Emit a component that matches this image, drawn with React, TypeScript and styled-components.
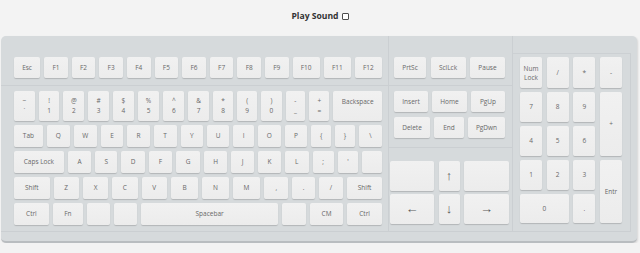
import React from "react";
import styled, { createGlobalStyle } from "styled-components";

const Global = createGlobalStyle`
  html, body { margin: 0; padding: 0; background: #f3f3f3; }
  body { font-family: "Open Sans", "DejaVu Sans", sans-serif; }
`;

const Header = styled.div`
  height: 36px;
  display: flex;
  align-items: center;
  justify-content: center;
  padding-bottom: 5px;
  box-sizing: border-box;
`;

const Title = styled.label`
  font: 700 8.6px "Open Sans", sans-serif;
  color: #333;
  display: flex;
  align-items: center;
`;

const Check = styled.input`
  appearance: none;
  width: 7px;
  height: 7px;
  margin: 1px 0 0 3px;
  border: 1px solid #4d4d4d;
  border-radius: 1px;
  background: #fff;
  box-sizing: border-box;
`;

const Board = styled.div`
  margin-left: 1px;
  width: 636px;
  height: 207px;
  box-sizing: border-box;
  display: flex;
  align-items: stretch;
  padding: 0 6px 9px 0;
  background: #d6dadc;
  border-radius: 5px;
  border-bottom: 2px solid #b9bdc0;
  box-shadow: 1px 1px 2px rgba(0, 0, 0, 0.12);
`;

const line = "1px solid #cbcfd2";

const Section = styled.div<{ $w: number }>`
  width: ${(p) => p.$w}px;
  box-sizing: border-box;
  border-right: ${line};
  display: flex;
  flex-direction: column;
`;

const Block = styled.div<{ $pad: string; $fill?: boolean; $gap?: number }>`
  padding: ${(p) => p.$pad};
  border-bottom: ${line};
  display: flex;
  flex-direction: column;
  gap: ${(p) => p.$gap ?? 4}px;
  flex: ${(p) => (p.$fill ? "1 1 auto" : "0 0 auto")};
`;

const Row = styled.div<{ $h: number; $gap?: number }>`
  display: flex;
  height: ${(p) => p.$h}px;
  gap: ${(p) => p.$gap ?? 4}px;
`;

const Key = styled.div<{ $w?: number; $top?: boolean; $lh?: number; $arrow?: boolean }>`
  flex: ${(p) => p.$w ?? 1} 1 0;
  min-width: 0;
  display: flex;
  flex-direction: column;
  align-items: center;
  justify-content: ${(p) => (p.$top ? "flex-start" : "center")};
  padding-top: ${(p) => (p.$top ? "6px" : "0")};
  box-sizing: border-box;
  background: linear-gradient(#f1f1f1, #ececec);
  border-radius: 2px;
  box-shadow: 0 1px 1px rgba(0, 0, 0, 0.17);
  font-family: ${(p) => (p.$arrow ? '"Liberation Sans", sans-serif' : '"Open Sans", sans-serif')};
  font-size: ${(p) => (p.$arrow ? "13px" : "6.5px")};
  line-height: ${(p) => p.$lh ?? 10}px;
  color: ${(p) => (p.$arrow ? "#5a5a5a" : "#686868")};
  white-space: nowrap;
`;

const Arrows = styled.div`
  display: grid;
  grid-template-columns: 44px 21px 45px;
  grid-template-rows: 30px 30px;
  column-gap: 4.5px;
  row-gap: 3px;
`;

const Numpad = styled.div`
  width: 118px;
  box-sizing: border-box;
  margin-top: 17px;
  border-top: 1px solid #ccd0d3;
  border-right: ${line};
  border-bottom: ${line};
  padding: 3px 8px 7px 7px;
`;

const PadGrid = styled.div`
  display: grid;
  grid-template-columns: repeat(4, 1fr);
  grid-template-rows: 31px 30px 30px 30px 29px;
  column-gap: 4.67px;
  row-gap: 4px;
`;

const PadKey = styled(Key)<{ $col?: string; $row?: string }>`
  grid-column: ${(p) => p.$col ?? "auto"};
  grid-row: ${(p) => p.$row ?? "auto"};
`;

type K = [string | string[], number];

const fnRow: K[] = [
  ["Esc", 26],
  ...Array.from({ length: 9 }, (_, i) => [`F${i + 1}`, 23.5] as K),
  ["F10", 27],
  ["F11", 27],
  ["F12", 27],
];

const numRow: K[] = [
  [["~", "`"], 20.5],
  [["!", "1"], 20.5],
  [["@", "2"], 20.5],
  [["#", "3"], 20.5],
  [["$", "4"], 20.5],
  [["%", "5"], 21.5],
  [["^", "6"], 20.5],
  [["&", "7"], 20.5],
  [["*", "8"], 20],
  [["(", "9"], 20],
  [[")", "0"], 20],
  [["-", "_"], 19.5],
  [["+", "="], 20],
  ["Backspace", 48],
];

const qRow: K[] = [
  ["Tab", 29],
  ["Q", 23],
  ["W", 23],
  ["E", 22.5],
  ["R", 22.5],
  ["T", 23],
  ["Y", 22.5],
  ["U", 22.5],
  ["I", 20.5],
  ["O", 23],
  ["P", 22.5],
  ["{", 20],
  ["}", 20],
  ["\\", 23],
];

const aRow: K[] = [
  ["Caps Lock", 49],
  ["A", 23],
  ["S", 22],
  ["D", 23],
  ["F", 23],
  ["G", 23.5],
  ["H", 23],
  ["J", 22],
  ["K", 23],
  ["L", 23],
  [";", 21],
  ["'", 20],
  ["", 19.5],
];

const zRow: K[] = [
  ["Shift", 35],
  ["Z", 25],
  ["X", 25],
  ["C", 25],
  ["V", 25],
  ["B", 27],
  ["N", 26],
  ["M", 27],
  [",", 24],
  [".", 22],
  ["/", 24],
  ["Shift", 34.5],
];

const ctrlRow: K[] = [
  ["Ctrl", 34.5],
  ["Fn", 30],
  ["", 23],
  ["", 23],
  ["Spacebar", 135],
  ["", 24],
  ["CM", 33],
  ["Ctrl", 34.5],
];

const KeyRow = ({ keys, h, topSingle }: { keys: K[]; h: number; topSingle?: boolean }) => (
  <Row $h={h}>
    {keys.map(([label, w], i) => (
      <Key key={i} $w={w} $top={topSingle && !Array.isArray(label)}>
        {Array.isArray(label) ? label.map((l, j) => <span key={j}>{l}</span>) : label}
      </Key>
    ))}
  </Row>
);

export default function App() {
  return (
    <>
      <Global />
      <Header>
        <Title>
          Play Sound
          <Check type="checkbox" />
        </Title>
      </Header>
      <Board>
        <Section $w={388}>
          <Block $pad="21px 6px 7px 13px">
            <KeyRow keys={fnRow} h={21} />
          </Block>
          <Block $pad="5px 6px 6px 13px" $fill>
            <KeyRow keys={numRow} h={30} topSingle />
            <KeyRow keys={qRow} h={22} />
            <KeyRow keys={aRow} h={22} />
            <KeyRow keys={zRow} h={22} />
            <KeyRow keys={ctrlRow} h={22} />
          </Block>
        </Section>
        <Section $w={124}>
          <Block $pad="21px 7px 7px 5px">
            <Row $h={21} $gap={4.5}>
              <Key $w={32}>PrtSc</Key>
              <Key $w={35}>SclLck</Key>
              <Key $w={35}>Pause</Key>
            </Row>
          </Block>
          <Block $pad="5px 7px 9px 5px" $gap={5}>
            <Row $h={21}>
              <Key $w={34}>Insert</Key>
              <Key $w={35}>Home</Key>
              <Key $w={34}>PgUp</Key>
            </Row>
            <Row $h={21}>
              <Key $w={36}>Delete</Key>
              <Key $w={30}>End</Key>
              <Key $w={37}>PgDwn</Key>
            </Row>
          </Block>
          <Block $pad="13px 3px 6px 1px" $fill>
            <Arrows>
              <Key />
              <Key $arrow>↑</Key>
              <Key />
              <Key $arrow>←</Key>
              <Key $arrow>↓</Key>
              <Key $arrow>→</Key>
            </Arrows>
          </Block>
        </Section>
        <Numpad>
          <PadGrid>
            <PadKey $lh={9}>
              <span>Num</span>
              <span>Lock</span>
            </PadKey>
            <PadKey>/</PadKey>
            <PadKey>*</PadKey>
            <PadKey>-</PadKey>
            <PadKey>7</PadKey>
            <PadKey>8</PadKey>
            <PadKey>9</PadKey>
            <PadKey $row="span 2">+</PadKey>
            <PadKey>4</PadKey>
            <PadKey>5</PadKey>
            <PadKey>6</PadKey>
            <PadKey>1</PadKey>
            <PadKey>2</PadKey>
            <PadKey>3</PadKey>
            <PadKey $row="span 2">Entr</PadKey>
            <PadKey $col="span 2">0</PadKey>
            <PadKey>.</PadKey>
          </PadGrid>
        </Numpad>
      </Board>
    </>
  );
}
